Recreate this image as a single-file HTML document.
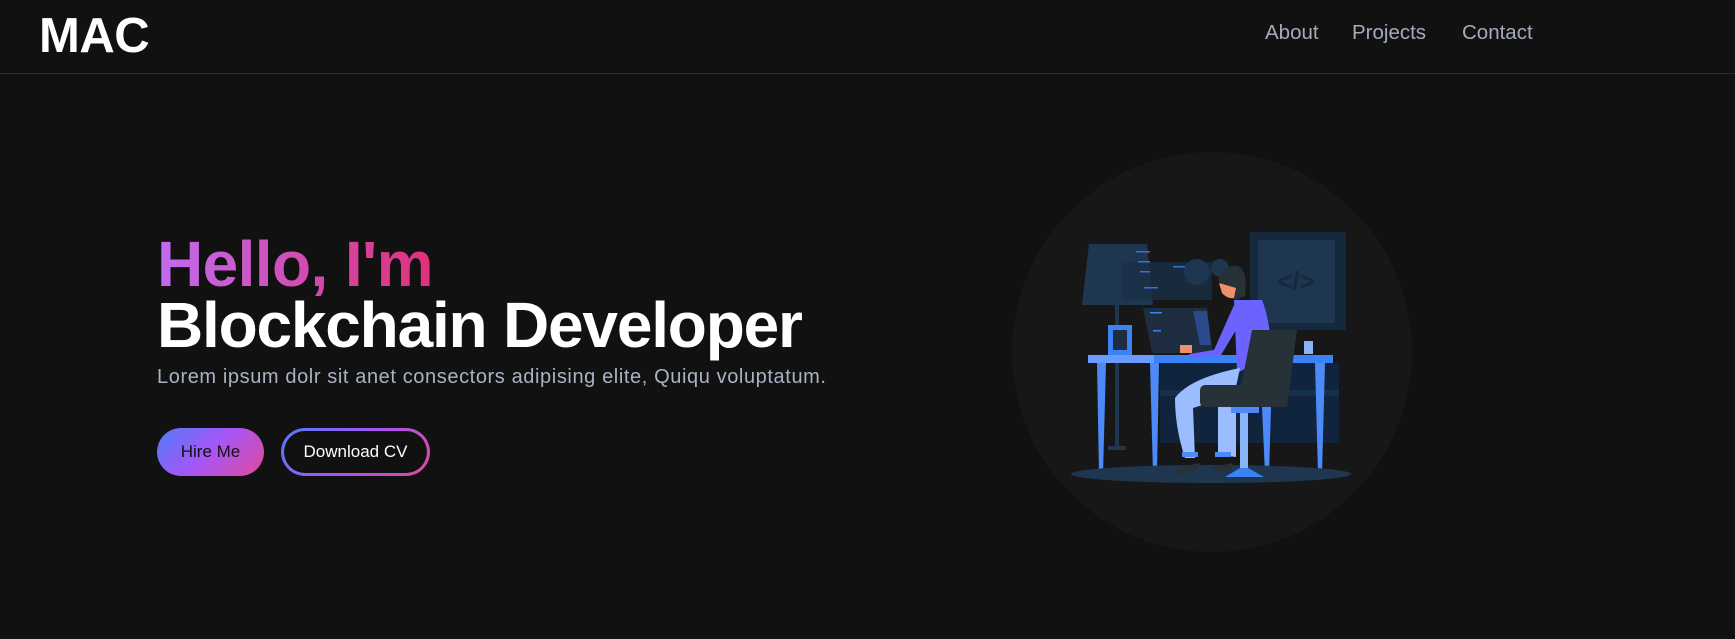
<!DOCTYPE html>
<html><head><meta charset="utf-8"><style>
*{margin:0;padding:0;box-sizing:border-box}
body{width:1735px;height:639px;background:#111111;font-family:"Liberation Sans",sans-serif;position:relative;overflow:hidden}
.logo{position:absolute;left:39px;top:8px;font-size:49px;font-weight:bold;color:#fff;letter-spacing:-0.5px}
.nav{position:absolute;top:21px;font-size:20.5px;color:#a3abbb}
.line{position:absolute;left:0;top:73px;width:1735px;height:1px;background:#2e2e2e}
h1{position:absolute;left:157px;font-size:64px;font-weight:bold;letter-spacing:-1.2px;white-space:nowrap;line-height:1}
.h1a{top:232px;letter-spacing:-0.6px;background:linear-gradient(90deg,#c06cf0,#e0307a);-webkit-background-clip:text;background-clip:text;color:transparent}
.h1b{top:293px;color:#fff}
p{position:absolute;left:157px;top:366px;font-size:20px;color:#a9b3c3;letter-spacing:0.6px;white-space:nowrap}
.btn{position:absolute;top:428px;height:48px;border-radius:24px;font-size:17px;display:flex;align-items:center;justify-content:center}
.b1{left:157px;width:107px;background:linear-gradient(135deg,#4f7cf7,#a855f7 50%,#e04a9a);color:#111}
.b2{left:281px;width:149px;background:linear-gradient(135deg,#4f7cf7,#a855f7 50%,#e04a9a);}
.b2 span{position:absolute;left:3px;top:3px;right:3px;bottom:3px;background:#111;border-radius:21px;display:flex;align-items:center;justify-content:center;color:#fff}
svg{position:absolute;left:1000px;top:140px}
</style></head><body>
<div class="logo">MAC</div>
<div class="nav" style="left:1265px">About</div>
<div class="nav" style="left:1352px">Projects</div>
<div class="nav" style="left:1462px">Contact</div>
<div class="line"></div>
<h1 class="h1a">Hello, I'm</h1>
<h1 class="h1b">Blockchain Developer</h1>
<p>Lorem ipsum dolr sit anet consectors adipising elite, Quiqu voluptatum.</p>
<div class="btn b1">Hire Me</div>
<div class="btn b2"><span>Download CV</span></div>
<svg width="420" height="420" viewBox="0 0 420 420">
<circle cx="212" cy="212" r="200" fill="#171717"/>
<rect x="250" y="92" width="96" height="98" fill="#14293d"/>
<rect x="258" y="100" width="77" height="83" fill="#1e3650"/>
<text x="296" y="150" font-family="Liberation Sans" font-weight="bold" font-size="26" fill="#14293d" text-anchor="middle">&lt;/&gt;</text>
<polygon points="89,104 147,104 153,165 82,165" fill="#1e3650"/>
<rect x="115" y="165" width="4" height="145" fill="#1e3650"/>
<rect x="108" y="306" width="18" height="4" fill="#1e3650"/>
<rect x="122" y="122" width="90" height="38" fill="#1a2f47" opacity="0.8"/>
<g fill="#3b6fd6"><rect x="136" y="111" width="14" height="1.5"/><rect x="138" y="121" width="12" height="1.5"/><rect x="140" y="131" width="10" height="1.5"/><rect x="144" y="147" width="14" height="1.5"/><rect x="173" y="126" width="18" height="1.5"/></g>
<circle cx="197" cy="132" r="13" fill="#1e3650"/>
<circle cx="220" cy="128" r="9" fill="#1e3650"/>
<rect x="160" y="223" width="179" height="80" fill="#10253d"/>
<rect x="160" y="250" width="179" height="6" fill="#14304d"/>
<rect x="88" y="215" width="245" height="8" fill="#3b82f6"/>
<rect x="88" y="215" width="66" height="8" fill="#6a9cff"/>
<polygon points="97,223 106,223 103,334 99,334" fill="#4d8af7"/>
<polygon points="150,223 159,223 157,334 153,334" fill="#4d8af7"/>
<polygon points="315,223 325,223 322,334 318,334" fill="#4d8af7"/>
<polygon points="262,267 271,267 269,334 265,334" fill="#4d8af7"/>
<polygon points="143,168 207,168 213,213 152,213" fill="#1e2d40"/>
<polygon points="193,171 207,171 211,205 200,205" fill="#2a4a8a"/>
<rect x="150" y="172" width="12" height="1.5" fill="#3b82f6"/>
<rect x="153" y="190" width="8" height="1.5" fill="#3b82f6"/>
<rect x="108" y="185" width="24" height="30" fill="#3b82f6"/>
<rect x="113" y="190" width="14" height="20" fill="#1e2d40"/>
<rect x="304" y="201" width="9" height="13" fill="#8ab4f8"/>
<ellipse cx="211" cy="334" rx="140" ry="9" fill="#1e3650"/>
<path d="M218 140 q5 -16 20 -14 q10 4 7 30 l-10 4 z" fill="#263238"/>
<path d="M219 143 l3 10 q5 6 12 5 l2 -10 z" fill="#f28f6b"/>
<path d="M234 160 l28 0 q8 20 10 55 l-35 18 z" fill="#6c63ff"/>
<path d="M234 165 l-20 45 l-25 4 l0 4 l32 -3 l18 -30 z" fill="#6c63ff"/>
<rect x="180" y="205" width="12" height="8" fill="#f28f6b"/>
<path d="M240 228 q-50 10 -65 30 q0 30 10 60 l10 0 l-2 -50 l25 -8 l0 55 l18 2 l0 -70 z" fill="#9bbcff"/>
<rect x="182" y="312" width="16" height="5" fill="#4d8af7"/>
<rect x="215" y="312" width="16" height="5" fill="#4d8af7"/>
<path d="M172 335 l25 -4 l3 -8 l-20 4 z" fill="#263238"/>
<path d="M212 333 l20 -2 l0 -8 l-18 4 z" fill="#263238"/>
<polygon points="252,190 297,190 287,267 237,267" fill="#263238"/>
<rect x="200" y="245" width="87" height="22" rx="5" fill="#263238"/>
<rect x="231" y="267" width="28" height="6" fill="#4d8af7"/>
<rect x="240" y="273" width="8" height="55" fill="#8ab4f8"/>
<polygon points="225,337 264,337 248,328 240,328" fill="#3b82f6"/>
</svg>
</body></html>
